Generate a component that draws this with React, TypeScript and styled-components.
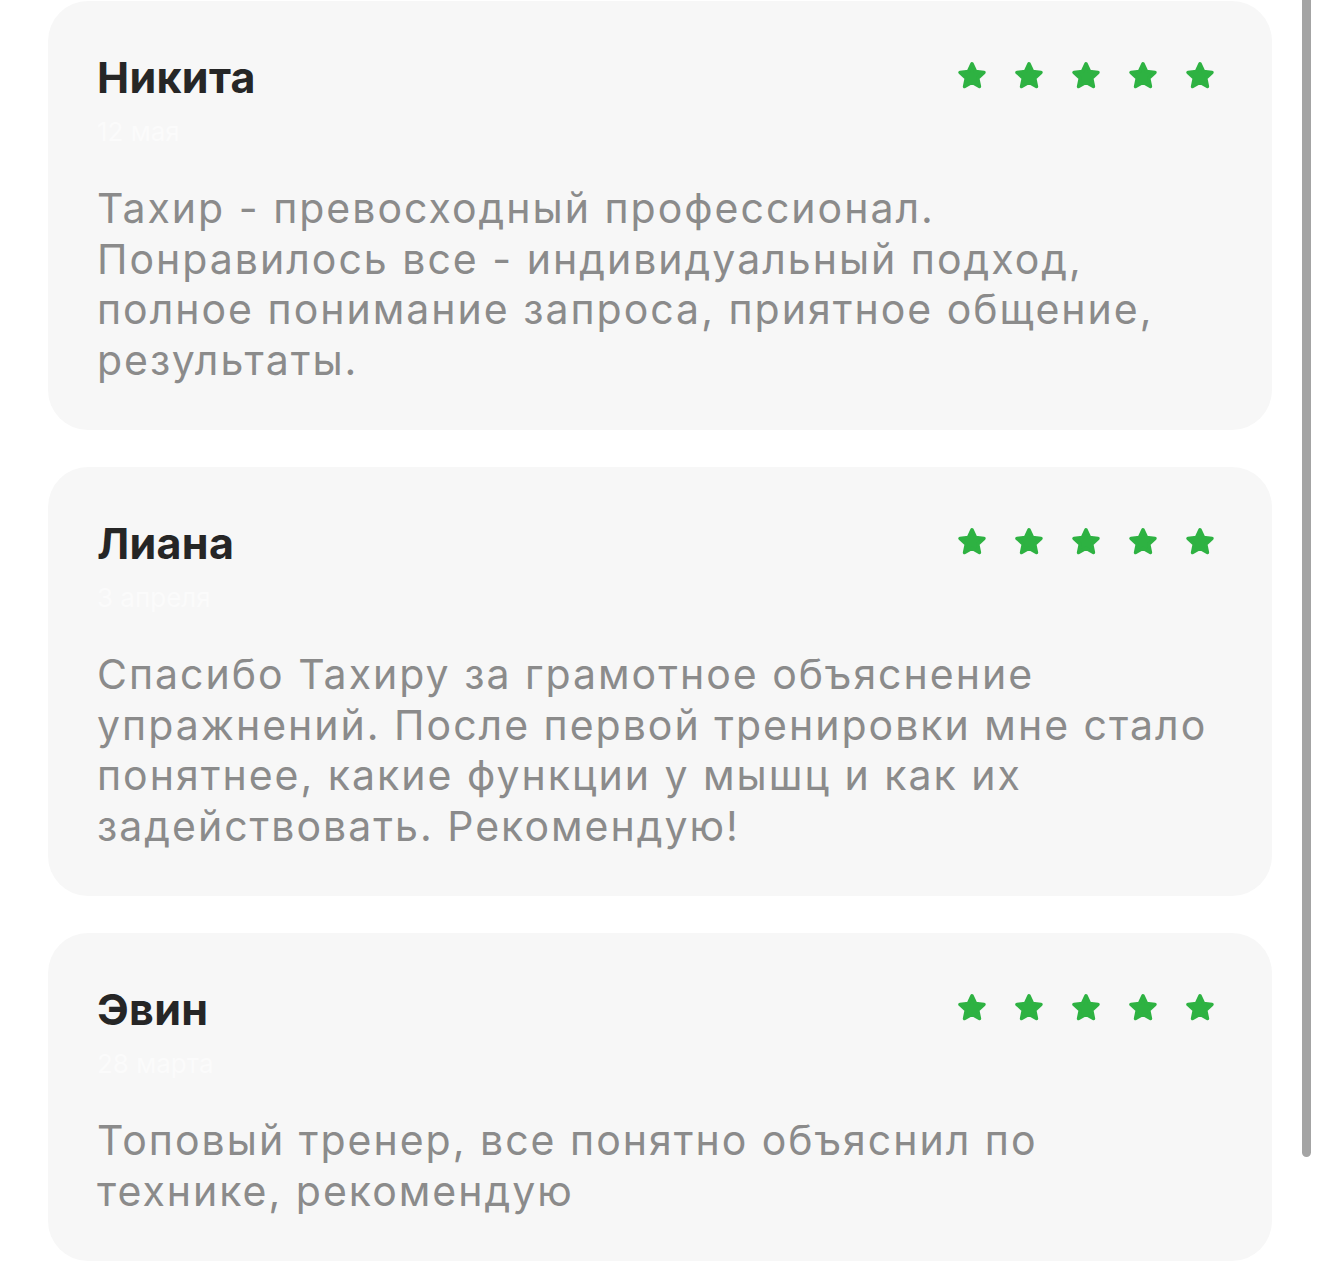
import React from 'react'
import styled, { createGlobalStyle } from 'styled-components'

type Review = {
  name: string
  date: string
  rating: number
  text: string
}

const reviews: Review[] = [
  {
    name: 'Никита',
    date: '12 мая',
    rating: 5,
    text: 'Тахир - превосходный профессионал.\nПонравилось все - индивидуальный подход, полное понимание запроса, приятное общение, результаты.',
  },
  {
    name: 'Лиана',
    date: '3 апреля',
    rating: 5,
    text: 'Спасибо Тахиру за грамотное объяснение упражнений. После первой тренировки мне стало понятнее, какие функции у мышц и как их задействовать. Рекомендую!',
  },
  {
    name: 'Эвин',
    date: '28 марта',
    rating: 5,
    text: 'Топовый тренер, все понятно объяснил по технике, рекомендую',
  },
]

const GlobalStyle = createGlobalStyle`
  body {
    margin: 0;
    background: #ffffff;
    font-family: Inter, 'Noto Sans', 'DejaVu Sans', sans-serif;
  }
`

const Star: React.FC = () => (
  <StarIcon viewBox="0 0 24 24">
    <polygon points="12,2.8 14.7,8.6 21,9.3 16.3,13.6 17.6,19.9 12,16.7 6.4,19.9 7.7,13.6 3,9.3 9.3,8.6" />
  </StarIcon>
)

const ReviewCard: React.FC<{ review: Review }> = ({ review }) => (
  <Card>
    <Header>
      <Name>{review.name}</Name>
      <Stars>
        {Array.from({ length: review.rating }).map((_, i) => (
          <Star key={i} />
        ))}
      </Stars>
    </Header>
    <DateLabel>{review.date}</DateLabel>
    <Text>{review.text}</Text>
  </Card>
)

export default function App() {
  return (
    <>
      <GlobalStyle />
      <Page>
        <Feed>
          {reviews.map(r => (
            <ReviewCard key={r.name} review={r} />
          ))}
        </Feed>
        <ScrollThumb />
      </Page>
    </>
  )
}

const Page = styled.div`
  display: flex;
  align-items: flex-start;
  height: 1267px;
  overflow: hidden;
`

const Feed = styled.div`
  display: flex;
  flex-direction: column;
  gap: 37px;
  width: 1224px;
  margin-left: 48px;
  padding-top: 1px;
`

const ScrollThumb = styled.div`
  width: 9px;
  height: 1157px;
  margin-left: 30px;
  background: #a4a4a4;
  border-radius: 0 0 5px 5px;
`

const Card = styled.div`
  display: flex;
  flex-direction: column;
  padding: 48px 49px 45px 49px;
  background: #f7f7f7;
  border-radius: 40px;
`

const Header = styled.div`
  display: flex;
  align-items: center;
  justify-content: space-between;
`

const Name = styled.span`
  font-size: 43px;
  line-height: 56px;
  font-weight: 700;
  color: #262626;
  letter-spacing: 0.3px;
`

const Stars = styled.div`
  display: flex;
  gap: 25px;
  margin: -3px 7px 0 0;
`

const StarIcon = styled.svg`
  width: 32px;
  height: 32px;
  fill: #2eb242;
  stroke: #2eb242;
  stroke-width: 2.6;
  stroke-linejoin: round;
`

const DateLabel = styled.span`
  margin-top: 10px;
  font-size: 26px;
  line-height: 34px;
  color: #fbfbfb;
`

const Text = styled.p`
  margin: 34px 0 0;
  font-size: 41px;
  line-height: 50.5px;
  color: #8b8b8b;
  letter-spacing: 2px;
  white-space: pre-line;
`
